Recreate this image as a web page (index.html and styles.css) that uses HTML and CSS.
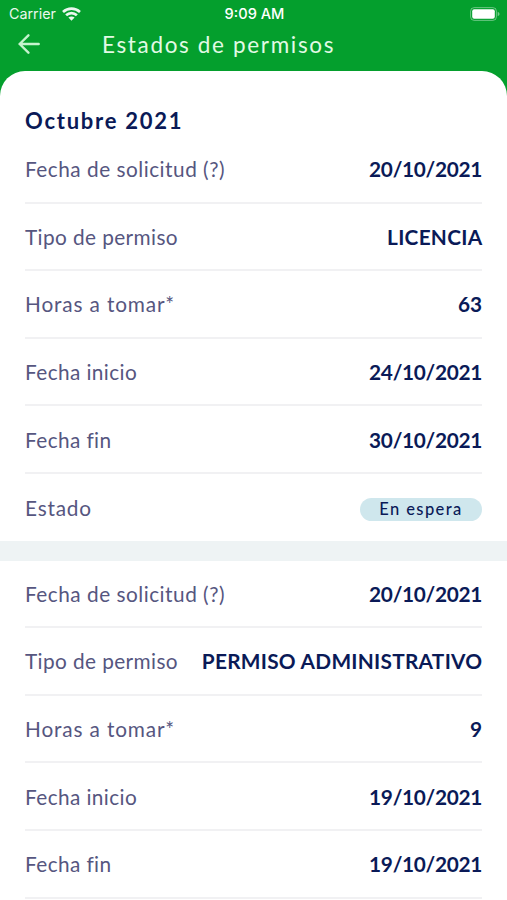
FILE: index.html
```html
<!DOCTYPE html>
<html lang="es">
<head>
    <meta charset="utf-8">
    <title>Estados de permisos</title>
    <link rel="stylesheet" href="styles.css">
</head>
<body>
    <header class="header">
        <div class="status-bar">
            <div class="carrier">
                <span>Carrier</span>
                <svg class="wifi" width="19" height="14" viewBox="0 0 19 14">
                    <path d="M1 4.9C6 .4 13 .4 18 4.9" />
                    <path d="M4.1 8.2C7.2 5.3 11.8 5.3 14.9 8.2" />
                    <path class="dot" d="M6.4 10.5C8.2 9 10.8 9 12.6 10.5L9.5 13.7Z" />
                </svg>
            </div>
            <span class="time">9:09 AM</span>
            <svg class="battery" width="30" height="14" viewBox="0 0 30 14">
                <rect class="case" x=".6" y=".6" width="25.8" height="12.8" rx="3.6" />
                <rect class="charge" x="2.2" y="2.2" width="22.6" height="9.6" rx="2" />
                <path class="tip" d="M27.7 4.7Q29.6 5.4 29.6 7T27.7 9.3Z" />
            </svg>
        </div>
        <div class="nav">
            <svg class="back" width="22" height="20" viewBox="0 0 22 20">
                <path d="M10.4 1.3L1.6 10L10.4 18.7M1.6 10H20.7" />
            </svg>
            <h1>Estados de permisos</h1>
        </div>
    </header>

    <main class="card">
        <section class="permiso">
            <h2>Octubre 2021</h2>
            <div class="row"><span class="label solicitud">Fecha de solicitud (?)</span><span class="value">20/10/2021</span></div>
            <div class="row"><span class="label">Tipo de permiso</span><span class="value tipo">LICENCIA</span></div>
            <div class="row"><span class="label horas">Horas a tomar*</span><span class="value numero">63</span></div>
            <div class="row"><span class="label">Fecha inicio</span><span class="value">24/10/2021</span></div>
            <div class="row"><span class="label">Fecha fin</span><span class="value">30/10/2021</span></div>
            <div class="row last"><span class="label estado">Estado</span><span class="badge">En espera</span></div>
        </section>
        <div class="separator"></div>
        <section class="permiso">
            <div class="row"><span class="label solicitud">Fecha de solicitud (?)</span><span class="value">20/10/2021</span></div>
            <div class="row"><span class="label">Tipo de permiso</span><span class="value tipo">PERMISO ADMINISTRATIVO</span></div>
            <div class="row"><span class="label horas">Horas a tomar*</span><span class="value numero">9</span></div>
            <div class="row"><span class="label">Fecha inicio</span><span class="value">19/10/2021</span></div>
            <div class="row"><span class="label">Fecha fin</span><span class="value">19/10/2021</span></div>
        </section>
    </main>
</body>
</html>
```

FILE: styles.css
```css
* {
    box-sizing: border-box;
}

body {
    margin: 0;
    height: 900px;
    overflow: hidden;
    background-color: #049f2d;
    font-family: Lato, sans-serif;
}

.header {
    height: 71px;
    color: white;
}

.status-bar {
    display: grid;
    grid-template-columns: 1fr auto 1fr;
    align-items: center;
    height: 27px;
    padding: 0 7px 0 9px;
    font-family: Inter, sans-serif;
    font-size: 14.3px;
}

.carrier {
    display: flex;
    align-items: center;
    gap: 6px;
    opacity: 0.92;
}

.wifi {
    fill: none;
    stroke: white;
    stroke-width: 2.7;
}

.wifi .dot {
    fill: white;
    stroke: none;
}

.time {
    font-weight: 500;
    font-size: 14.6px;
}

.battery {
    justify-self: end;
}

.case {
    fill: none;
    stroke: white;
    stroke-opacity: 0.4;
}

.charge {
    fill: white;
}

.tip {
    fill: white;
    opacity: 0.45;
}

.nav {
    display: flex;
    align-items: center;
    height: 33px;
    padding-left: 18px;
}

.back {
    fill: none;
    stroke: #c5f3cd;
    stroke-width: 2.4;
    stroke-linecap: round;
    stroke-linejoin: round;
}

h1 {
    margin: 2px 0 0 62px;
    color: #e2fae5;
    font-size: 22.5px;
    font-weight: 400;
    line-height: 30px;
    letter-spacing: 1.65px;
}

.card {
    height: 829px;
    overflow: hidden;
    background-color: white;
    border-radius: 25px 25px 0 0;
}

.permiso {
    padding: 0 25px;
}

h2 {
    height: 65px;
    margin: 0;
    padding-top: 35px;
    color: #0a1a57;
    font-size: 22px;
    font-weight: 700;
    line-height: 30px;
    letter-spacing: 1.75px;
}

.row {
    display: flex;
    align-items: center;
    justify-content: space-between;
    height: 67.6px;
    border-bottom: 2px solid #f1f1f3;
    white-space: nowrap;
}

.row.last {
    height: 67px;
    border-bottom: none;
}

.label {
    color: #56567f;
    font-size: 20.8px;
    letter-spacing: 0.4px;
}

.label.solicitud {
    letter-spacing: 0.5px;
}

.label.horas {
    letter-spacing: 0.85px;
}

.label.estado {
    letter-spacing: 0.8px;
}

.value {
    color: #0a1a57;
    font-size: 20.8px;
    font-weight: 700;
    letter-spacing: -0.3px;
}

.value.tipo {
    margin-right: -0.4px;
    letter-spacing: 0.28px;
}

.value.numero {
    letter-spacing: 0;
}

.badge {
    width: 122px;
    height: 23px;
    margin-top: 4px;
    border-radius: 12px;
    background-color: #cfe7ed;
    color: #0a1a57;
    font-size: 16.5px;
    font-weight: 500;
    line-height: 22px;
    letter-spacing: 1.4px;
    text-align: center;
}

.separator {
    height: 19.6px;
    background-color: #eef3f4;
}
```
